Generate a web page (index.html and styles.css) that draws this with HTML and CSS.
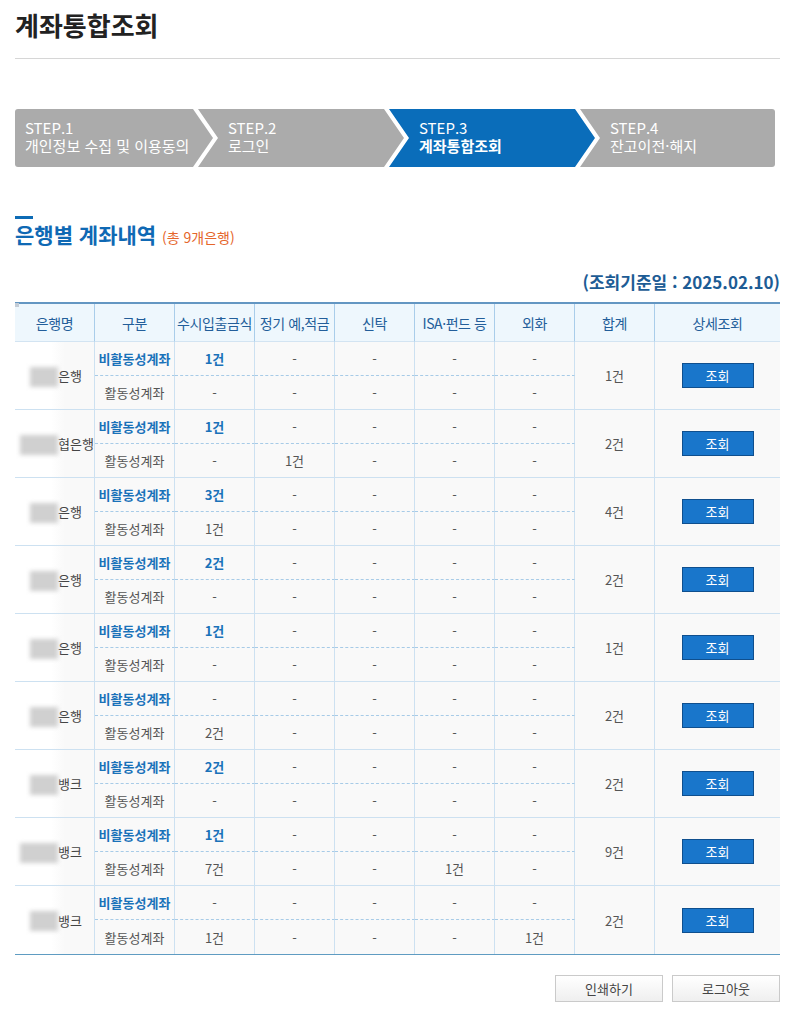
FILE: index.html
```html
<!DOCTYPE html>
<html lang="ko">
<head>
<meta charset="utf-8">
<title>계좌통합조회</title>
<link rel="stylesheet" href="styles.css">
</head>
<body>
<div class="page">
  <header class="page-head">
    <h1 class="page-title">계좌통합조회</h1>
  </header>

  <ol class="steps">
    <li class="step step-first"><span class="step-no">STEP.1</span><span class="step-name">개인정보 수집 및 이용동의</span></li>
    <li class="step"><span class="step-no">STEP.2</span><span class="step-name">로그인</span></li>
    <li class="step step-on"><span class="step-no">STEP.3</span><span class="step-name">계좌통합조회</span></li>
    <li class="step step-last"><span class="step-no">STEP.4</span><span class="step-name">잔고이전·해지</span></li>
  </ol>

  <section class="result">
    <div class="sec-bar"></div>
    <h2 class="sec-title">은행별 계좌내역 <span class="sec-count">(총 9개은행)</span></h2>
    <p class="base-date">(조회기준일 : 2025.02.10)</p>

    <div class="tbl">
      <div class="thead">
        <div class="th th-first">은행명</div>
        <div class="th">구분</div>
        <div class="th">수시입출금식</div>
        <div class="th">정기 예,적금</div>
        <div class="th">신탁</div>
        <div class="th">ISA·펀드 등</div>
        <div class="th">외화</div>
        <div class="th">합계</div>
        <div class="th th-last">상세조회</div>
      </div>

      <div class="group">
        <div class="c bank"><span class="mask"></span><span>은행</span></div>
        <div class="c top kind-off">비활동성계좌</div>
        <div class="c top em">1건</div><div class="c top">-</div><div class="c top">-</div><div class="c top">-</div><div class="c top">-</div>
        <div class="c sum">1건</div>
        <div class="c act"><button class="btn-view">조회</button></div>
        <div class="c">활동성계좌</div>
        <div class="c">-</div><div class="c">-</div><div class="c">-</div><div class="c">-</div><div class="c">-</div>
      </div>

      <div class="group">
        <div class="c bank"><span class="mask mask-w"></span><span>협은행</span></div>
        <div class="c top kind-off">비활동성계좌</div>
        <div class="c top em">1건</div><div class="c top">-</div><div class="c top">-</div><div class="c top">-</div><div class="c top">-</div>
        <div class="c sum">2건</div>
        <div class="c act"><button class="btn-view">조회</button></div>
        <div class="c">활동성계좌</div>
        <div class="c">-</div><div class="c">1건</div><div class="c">-</div><div class="c">-</div><div class="c">-</div>
      </div>

      <div class="group">
        <div class="c bank"><span class="mask"></span><span>은행</span></div>
        <div class="c top kind-off">비활동성계좌</div>
        <div class="c top em">3건</div><div class="c top">-</div><div class="c top">-</div><div class="c top">-</div><div class="c top">-</div>
        <div class="c sum">4건</div>
        <div class="c act"><button class="btn-view">조회</button></div>
        <div class="c">활동성계좌</div>
        <div class="c">1건</div><div class="c">-</div><div class="c">-</div><div class="c">-</div><div class="c">-</div>
      </div>

      <div class="group">
        <div class="c bank"><span class="mask"></span><span>은행</span></div>
        <div class="c top kind-off">비활동성계좌</div>
        <div class="c top em">2건</div><div class="c top">-</div><div class="c top">-</div><div class="c top">-</div><div class="c top">-</div>
        <div class="c sum">2건</div>
        <div class="c act"><button class="btn-view">조회</button></div>
        <div class="c">활동성계좌</div>
        <div class="c">-</div><div class="c">-</div><div class="c">-</div><div class="c">-</div><div class="c">-</div>
      </div>

      <div class="group">
        <div class="c bank"><span class="mask"></span><span>은행</span></div>
        <div class="c top kind-off">비활동성계좌</div>
        <div class="c top em">1건</div><div class="c top">-</div><div class="c top">-</div><div class="c top">-</div><div class="c top">-</div>
        <div class="c sum">1건</div>
        <div class="c act"><button class="btn-view">조회</button></div>
        <div class="c">활동성계좌</div>
        <div class="c">-</div><div class="c">-</div><div class="c">-</div><div class="c">-</div><div class="c">-</div>
      </div>

      <div class="group">
        <div class="c bank"><span class="mask"></span><span>은행</span></div>
        <div class="c top kind-off">비활동성계좌</div>
        <div class="c top">-</div><div class="c top">-</div><div class="c top">-</div><div class="c top">-</div><div class="c top">-</div>
        <div class="c sum">2건</div>
        <div class="c act"><button class="btn-view">조회</button></div>
        <div class="c">활동성계좌</div>
        <div class="c">2건</div><div class="c">-</div><div class="c">-</div><div class="c">-</div><div class="c">-</div>
      </div>

      <div class="group">
        <div class="c bank"><span class="mask"></span><span>뱅크</span></div>
        <div class="c top kind-off">비활동성계좌</div>
        <div class="c top em">2건</div><div class="c top">-</div><div class="c top">-</div><div class="c top">-</div><div class="c top">-</div>
        <div class="c sum">2건</div>
        <div class="c act"><button class="btn-view">조회</button></div>
        <div class="c">활동성계좌</div>
        <div class="c">-</div><div class="c">-</div><div class="c">-</div><div class="c">-</div><div class="c">-</div>
      </div>

      <div class="group">
        <div class="c bank"><span class="mask mask-w"></span><span>뱅크</span></div>
        <div class="c top kind-off">비활동성계좌</div>
        <div class="c top em">1건</div><div class="c top">-</div><div class="c top">-</div><div class="c top">-</div><div class="c top">-</div>
        <div class="c sum">9건</div>
        <div class="c act"><button class="btn-view">조회</button></div>
        <div class="c">활동성계좌</div>
        <div class="c">7건</div><div class="c">-</div><div class="c">-</div><div class="c">1건</div><div class="c">-</div>
      </div>

      <div class="group">
        <div class="c bank"><span class="mask"></span><span>뱅크</span></div>
        <div class="c top kind-off">비활동성계좌</div>
        <div class="c top">-</div><div class="c top">-</div><div class="c top">-</div><div class="c top">-</div><div class="c top">-</div>
        <div class="c sum">2건</div>
        <div class="c act"><button class="btn-view">조회</button></div>
        <div class="c">활동성계좌</div>
        <div class="c">1건</div><div class="c">-</div><div class="c">-</div><div class="c">-</div><div class="c">1건</div>
      </div>
    </div>

    <div class="actions">
      <button class="btn">인쇄하기</button>
      <button class="btn">로그아웃</button>
    </div>
  </section>
</div>
</body>
</html>
```

FILE: styles.css
```css
* { box-sizing: border-box; }

html, body {
  margin: 0;
  padding: 0;
  background: #fff;
}

body {
  font-family: "Noto Sans CJK KR", "Noto Sans", sans-serif;
  letter-spacing: 0;
  color: #555;
}

.page {
  width: 786px;
  padding: 0 6px 0 15px;
}

/* title */
.page-head {
  padding: 8px 0 16px;
  border-bottom: 1px solid #d6d6d6;
}

.page-title {
  margin: 0;
  font-size: 26px;
  line-height: 34px;
  font-weight: 700;
  color: #222;
}

/* steps */
.steps {
  list-style: none;
  margin: 50px 0 0;
  padding: 0;
  display: flex;
  width: 760px;
  height: 58px;
}

.step {
  height: 58px;
  width: 206px;
  margin-left: -15px;
  padding: 10px 0 0 30px;
  background: #ababab;
  color: #fff;
  font-size: 15px;
  line-height: 18px;
  display: flex;
  flex-direction: column;
  clip-path: polygon(0 0, calc(100% - 20px) 0, 100% 50%, calc(100% - 20px) 100%, 0 100%, 20px 50%);
}

.step-first {
  margin-left: 0;
  width: 198px;
  padding-left: 10px;
  border-radius: 3px 0 0 3px;
  clip-path: polygon(0 0, calc(100% - 20px) 0, 100% 50%, calc(100% - 20px) 100%, 0 100%);
}

.step-last {
  flex: 1;
  width: auto;
  border-radius: 0 3px 3px 0;
  clip-path: polygon(0 0, 100% 0, 100% 100%, 0 100%, 20px 50%);
}

.step-on {
  background: #0a6dba;
}

.step-on .step-name {
  font-weight: 700;
}

.step-no,
.step-name {
  display: block;
  white-space: nowrap;
}

/* section head */
.sec-bar {
  margin-top: 49px;
  width: 18px;
  height: 3px;
  background: #0d6bb5;
}

.sec-title {
  margin: 2px 0 0;
  font-size: 21px;
  line-height: 26px;
  font-weight: 700;
  color: #0f69b4;
}

.sec-count {
  font-size: 14px;
  font-weight: 400;
  color: #e5662b;
}

.base-date {
  margin: 20px 0 0;
  text-align: right;
  font-size: 17px;
  line-height: 24px;
  font-weight: 700;
  color: #1d5c95;
}

/* table */
.tbl {
  margin-top: 8px;
  width: 765px;
  border-top: 2px solid #6396c2;
  border-bottom: 1px solid #5f9cc2;
}

.thead,
.group {
  display: grid;
  grid-template-columns: repeat(8, 80px) 125px;
}

.thead {
  position: relative;
  background: #eef7fd;
}

.th {
  height: 38px;
  display: flex;
  align-items: center;
  justify-content: center;
  font-size: 14px;
  color: #235e9a;
  white-space: nowrap;
  letter-spacing: -0.03em;
  border-right: 1px solid #a9cdea;
  border-bottom: 1px solid #d3e4f2;
}

.th-last { border-right: 0; }

.th-first::before {
  content: "";
  position: absolute;
  left: 0;
  top: -1px;
  width: 4px;
  height: 4px;
  background: #c3ccd6;
}

.group {
  grid-template-rows: 34px 34px;
  background: #f9f9f9;
}

.c {
  display: flex;
  align-items: center;
  justify-content: center;
  font-size: 13px;
  color: #555;
  white-space: nowrap;
  border-right: 1px solid #cde1f1;
  border-bottom: 1px solid #cde1f1;
}

.c.top {
  border-bottom: 1px dashed #a7cbe7;
}

.bank,
.sum,
.act {
  grid-row: span 2;
}

.act { border-right: 0; }

.group:last-child .c { border-bottom: 0; }
.group:last-child .c.top { border-bottom: 1px dashed #a7cbe7; }

.bank {
  justify-content: flex-start;
  padding-left: 15px;
  background: linear-gradient(90deg, #fff 0, #fff 36px, #f9f9f9 50px);
  color: #444;
}

.mask {
  display: inline-block;
  width: 28px;
  height: 20px;
  margin-top: 2px;
  background: #d0d0d0;
  filter: blur(2px);
}

.mask-w {
  width: 38px;
  margin-left: -10px;
}

.kind-off {
  color: #1a72b9;
  font-weight: 700;
}

.em {
  color: #1a72b9;
  font-weight: 700;
}

.btn-view {
  width: 72px;
  height: 25px;
  padding: 0;
  margin: 0;
  border: 1px solid #0f4f8e;
  background: #1976cb;
  color: #fff;
  font-family: inherit;
  font-size: 13px;
  cursor: pointer;
}

/* bottom buttons */
.actions {
  display: flex;
  justify-content: flex-end;
  gap: 9px;
  margin-top: 20px;
}

.btn {
  width: 108px;
  height: 27px;
  padding: 0;
  border: 1px solid #cacaca;
  background: linear-gradient(#ffffff, #efefef);
  color: #444;
  font-family: inherit;
  font-size: 13px;
  cursor: pointer;
}
```
